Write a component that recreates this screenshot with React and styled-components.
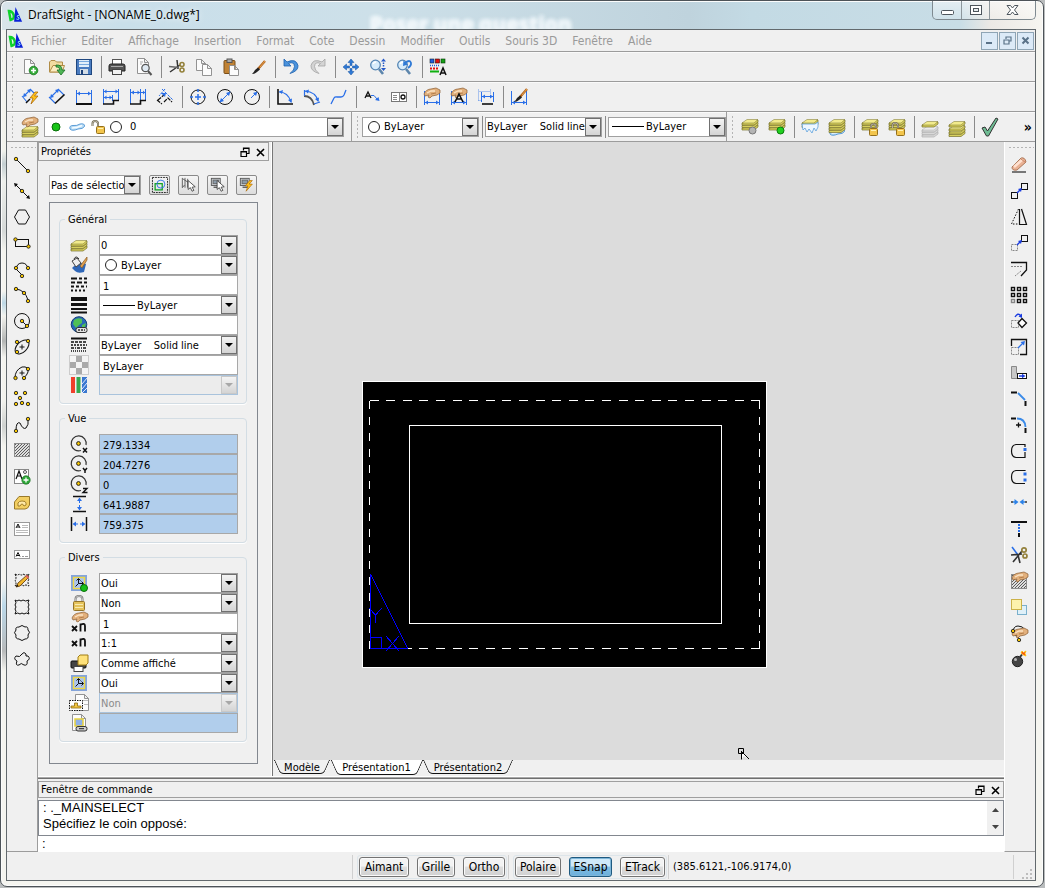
import React from "react";
import styled, { createGlobalStyle, css } from "styled-components";

const ui = `"DejaVu Sans Condensed", "DejaVu Sans", Tahoma, sans-serif`;
const chrome = `"Open Sans", "Noto Sans", "Segoe UI", sans-serif`;
const K = "#111";
const B = "#2a6fe8";

/* ---------- icon parts ---------- */

const Svg = styled.svg`
  display: block;
  flex: none;
  overflow: visible;
`;

const Dot = ({ x, y }) => <circle cx={x} cy={y} r="1.7" fill="#f6c600" stroke="#222" strokeWidth="0.9" />;
const Line = ({ d, c = K, w = 1, dash }) => (
  <path d={d} fill="none" stroke={c} strokeWidth={w} strokeDasharray={dash} />
);
const Hand = ({ x = 0, y = 0 }) => (
  <g transform={`translate(${x} ${y})`}>
    <path d="M1 6 C2 3 5 1 8 1 L13 0 L17 2 V5 L14 7 L9 8 L7 10 L5 9 L6 7 L2 8Z" fill="#e2b07c" stroke="#8a5c30" strokeWidth="0.7" />
    <path d="M4 5 L8 3 L12 3" fill="none" stroke="#fbe3c4" strokeWidth="1.3" />
    <path d="M8 6 L13 5" fill="none" stroke="#a8713e" strokeWidth="0.8" />
  </g>
);
const Stack = ({ y = 0, h = 3, top = "#f2eb8c", side = "#d8d05e", edge = "#77712c" }) => (
  <g transform={`translate(0 ${y})`}>
    {Array.from({ length: h }, (_, i) => (h - 1 - i) * 2.5).map((o) => (
      <g key={o} transform={`translate(0 ${o})`}>
        <path d="M1 5 V7 H13 L17 4 V2Z" fill={side} stroke={edge} strokeWidth="0.7" />
        <path d="M1 5 L6 1.500 H17 L13 5 Z" fill={top} stroke={edge} strokeWidth="0.5" />
      </g>
    ))}
  </g>
);
const Lock = ({ x = 0, y = 0, open }) => (
  <g transform={`translate(${x} ${y})`}>
    <path d={open ? "M-3.500 4 V1.500 Q-3.500 -1 -1 -1 Q2 -1 2 1.500 V4" : "M2 5 V2 Q2 0 4.500 0 Q7 0 7 2 V5"} fill="none" stroke="#6d6650" strokeWidth="2" />
    <path d={open ? "M-3.500 4 V1.500 Q-3.500 -1 -1 -1 Q2 -1 2 1.500 V4" : "M2 5 V2 Q2 0 4.500 0 Q7 0 7 2 V5"} fill="none" stroke="#d8d4c4" strokeWidth="0.7" />
    <rect x="0.500" y="4.500" width="8" height="7" rx="1" fill="#f3c54c" stroke="#94701c" />
    <path d="M2 6.500 H7" stroke="#fff2b0" />
  </g>
);
const Pencil = ({ x = 0, y = 0 }) => (
  <g transform={`translate(${x} ${y})`}>
    <path d="M1 13 L3 9 L12 1 L14 3 L5 12Z" fill="#f1b52c" stroke="#6b4312" strokeWidth="0.9" />
    <path d="M1 13 L2 10.500 L3.500 12Z" fill="#111" />
    <path d="M11 1.500 L13.500 4" stroke="#d66" strokeWidth="2" />
  </g>
);
const Brush = ({ x = 0, y = 0 }) => (
  <g transform={`translate(${x} ${y})`}>
    <path d="M14 1 L7 9" stroke="#b3641a" strokeWidth="2.4" />
    <path d="M14 1 L9 7" stroke="#f0b060" strokeWidth="0.8" />
    <path d="M7 7.500 L9 9.500 L6 12 Q4 14 1 14 Q3 12 4 10Z" fill="#222" />
  </g>
);
const Sheet = ({ x = 0, y = 0, w = 11, h = 14 }) => (
  <path d={`M${x} ${y} H${x + w - 4} L${x + w} ${y + 4} V${y + h} H${x}Z M${x + w - 4} ${y} V${y + 4} H${x + w}`} fill="#fcfcfc" stroke="#888" strokeWidth="0.9" />
);
const Lens = () => (
  <g>
    <path d="M10 11 L14 16" stroke="#5d86ac" strokeWidth="2.6" />
    <circle cx="6.500" cy="7" r="4.800" fill="#d7ecfb" stroke="#5686b4" strokeWidth="1.300" />
    <path d="M4 6 Q5 4 7 4" stroke="#fff" strokeWidth="1.300" fill="none" />
  </g>
);
const Globe = () => (
  <g>
    <circle cx="9" cy="8.500" r="7.800" fill="#2868b8" stroke="#123d73" />
    <path d="M4 4 Q8 1 12 3 L12 7 L9 9 L6 12 L3 8Z" fill="#4fc056" />
    <path d="M12 9 L16 7 L15 11 L12 11Z" fill="#4fc056" />
    <rect x="6" y="11.500" width="11" height="5" rx="2" fill="#e4e4e4" stroke="#333" />
    <path d="M8 14 H15" stroke="#333" strokeWidth="1.500" strokeDasharray="2 1" />
  </g>
);
const Target = ({ t }) => (
  <g>
    <path d="M11 15.500 A7.500 7.500 0 1 1 16 10" fill="none" stroke="#333" strokeWidth="1.200" />
    <circle cx="8.500" cy="8.500" r="1.900" fill="#f6c600" stroke="#222" />
    {t === "x" && <path d="M13 13 L17 17.500 M17 13 L13 17.500" stroke={K} strokeWidth="1.500" />}
    {t === "y" && <path d="M13 13 L15 15.500 L17 13 M15 15.500 V18" fill="none" stroke={K} strokeWidth="1.500" />}
    {t === "z" && <path d="M13 13.500 H17 L13 17.500 H17.500" fill="none" stroke={K} strokeWidth="1.400" />}
  </g>
);
const Axes = () => (
  <g>
    <rect x="1" y="1" width="16" height="16" fill="#84a4da" />
    <rect x="3.500" y="3.500" width="11" height="11" fill="#a9c4ee" stroke="#eed846" strokeWidth="1.400" />
    <path d="M8.500 5 V9.500 H13 M8.500 9.500 L5.500 12.500 M6.500 6.500 L8.500 4.500 L10.500 6.500 M11.500 7.500 L13.500 9.500 L11.500 11.500" fill="none" stroke={K} />
  </g>
);
const Xn = () => (
  <g fill="none" stroke={K} strokeWidth="1.800">
    <path d="M2 9 L7 14 M7 9 L2 14" />
    <path d="M10.500 14.500 V6.500 M10.500 8 Q15 5.500 15 9 V14.500" />
  </g>
);
const Hatch = ({ y = 0, h = 14 }) => (
  <g>
    <rect x="1.500" y={y + 0.5} width="15" height={h} fill="#dedede" stroke="#8c8c8c" />
    {[0, 1, 2, 3, 4, 5, 6, 7, 8].map((i) => {
      const s = 3 + i * 3;
      return (
        <path key={i} stroke="#5c5c5c" strokeWidth="1" d={`M${Math.max(2, s - h + 1)} ${y + Math.min(h, s - 1)} L${Math.min(16, s)} ${y + Math.max(1, s - 15)}`} />
      );
    })}
  </g>
);
const Screen = ({ x = 0, y = 0 }) => (
  <g transform={`translate(${x} ${y})`}>
    <rect x="0.500" y="0.500" width="10" height="8" fill="#c8ccd0" stroke="#555" />
    <rect x="2.500" y="2.500" width="6" height="4" fill="#8a9aa8" stroke="#666" />
    <path d="M3 10.500 H9" stroke="#555" strokeWidth="1.500" />
  </g>
);
const Cursor = ({ x = 0, y = 0 }) => (
  <path transform={`translate(${x} ${y})`} d="M0 0 V10 L2.500 8 L4.500 12 L6.500 11 L4.500 7.500 L8 7Z" fill="#fff" stroke="#333" strokeWidth="0.9" />
);
const Bolt = ({ x = 0, y = 0 }) => (
  <path transform={`translate(${x} ${y})`} d="M5 0 L0 6 H3 L1 12 L8 4 H4.500 L8 0Z" fill="#ffc21a" stroke="#a55f00" strokeWidth="0.700" />
);
const Puddle = ({ x = 0, y = 0 }) => (
  <g transform={`translate(${x} ${y})`}>
    <path d="M1 6 Q0 2.500 4 2.500 Q8 3 11 1 Q16 0 15.500 3.500 Q14 6 9 6 Q3 8.500 1 6Z" fill="#b9dcf5" stroke="#4f94d2" strokeWidth="0.9" />
    <path d="M3 5 Q8 5 13 2.500" stroke="#f4fbff" strokeWidth="1.500" fill="none" />
  </g>
);
const Arrows = () => (
  <g>
    <Line d="M1.500 3 V17 M16.500 3 V17 M2 14.500 H16" c={B} />
    <path d="M2 14.500 L5 12.500 V16.500Z M16 14.500 L13 12.500 V16.500Z" fill={B} />
  </g>
);

const icons = {
  logo: (
    <g>
      <path d="M2.200 4.500 L4 14.500 Q8.500 14 7.500 9 Q6 4.500 2.200 4.500Z" fill="none" stroke="#10d22c" strokeWidth="2.800" />
      <path d="M8 16.500 L9.500 0 L17 16.500Z" fill="#0a22d8" />
      <path d="M13.500 9.500 Q11 9 11.500 11 Q14.500 12 13.500 13.500 Q12.500 14.500 10.500 13.500" fill="none" stroke="#8fe0f4" strokeWidth="1.100" />
    </g>
  ),
  neu: (<g><Sheet x={3.5} y={1.5} w={10} h={14} /><circle cx="12.500" cy="12.500" r="4.300" fill="#35ad3a" stroke="#19751e" strokeWidth="0.8" /><path d="M12.500 10 V15 M10 12.500 H15" stroke="#fff" strokeWidth="1.600" /></g>),
  open: (<g><path d="M1.500 14 V4 L3 2.500 H7 L8.500 4 H14.500 V14Z" fill="#f3dca0" stroke="#b08c46" /><path d="M1.500 14 L5 7.500 H16.500 L14 14Z" fill="#fbecc0" stroke="#b08c46" /><path d="M8 7 Q14 6.500 14 12 H17 L13 17 L9 12 H11.500 Q12 9 8 9Z" fill="#4fb556" stroke="#1b6e26" strokeWidth="0.8" /></g>),
  save: (<g><rect x="1.500" y="1.500" width="15" height="15" fill="#4a7cc0" stroke="#1f477f" /><rect x="4" y="2" width="10" height="7" fill="#e3effa" /><path d="M4 3.500 H14 M4 6.500 H14" stroke="#7aaade" /><rect x="5" y="11" width="8" height="5" fill="#d4dde6" /><rect x="6" y="12" width="2" height="4" fill="#1d4178" /></g>),
  print: (<g><rect x="4.500" y="1.500" width="9" height="5" fill="#fff" stroke="#555" /><path d="M1 8 Q1 6 3 6 H15 Q17 6 17 8 V13 H1Z" fill="#555" stroke="#222" /><path d="M3 8.500 H15" stroke="#aaa" /><rect x="4.500" y="11.500" width="9" height="5" fill="#f2f2f2" stroke="#444" /></g>),
  preview: (<g><Sheet x={2.5} y={0.5} w={11} h={15} /><path d="M5 4 H8 M5 6 H7" stroke="#aaa" /><path d="M13 13 L16.500 17" stroke="#555" strokeWidth="2" /><circle cx="10.500" cy="10" r="3.700" fill="#dfe9f2" stroke="#555" strokeWidth="1.200" /></g>),
  cut: (<g><path d="M2 14 L12 7 M9 2 L10 11" stroke="#333" strokeWidth="1.500" /><path d="M1 8.500 L11 9.500" stroke="#666" strokeWidth="1.500" /><circle cx="14" cy="6.500" r="2" fill="none" stroke="#93803a" strokeWidth="1.600" /><circle cx="14" cy="12" r="2" fill="none" stroke="#93803a" strokeWidth="1.600" /></g>),
  copy: (<g><Sheet x={1.5} y={1.5} w={9} h={11} /><Sheet x={7.5} y={6.5} w={9} h={11} /></g>),
  paste: (<g><rect x="2" y="2.500" width="11" height="13" rx="1" fill="#c08234" stroke="#7a4e18" /><rect x="5" y="1" width="5" height="3.500" fill="#aaa" stroke="#555" /><Sheet x={7.5} y={7.5} w={9} h={10} /></g>),
  brush: <Brush x={2} y={2} />,
  undo: <path d="M2 1 V8 H9 L6.500 5.500 Q12 3 12.500 8.500 Q12.500 12 8 15.500 Q16.500 13 16 7.500 Q14 0 5 4Z" fill="#4b93dc" stroke="#1c61ae" strokeWidth="0.8" />,
  redo: <path d="M16 1 V8 H9 L11.500 5.500 Q6 3 5.500 8.500 Q5.500 12 10 15.500 Q1.500 13 2 7.500 Q4 0 13 4Z" fill="#d4d4d4" stroke="#a4a4a4" strokeWidth="0.8" />,
  pan: (<g fill="#2f7ad6" stroke="#1653a0" strokeWidth="0.5"><path d="M9 1 L12 4.500 H10 V7.500 H8 V4.500 H6Z M9 17 L12 13.500 H10 V10.500 H8 V13.500 H6Z M1 9 L4.500 6 V8 H7.500 V10 H4.500 V12Z M17 9 L13.500 6 V8 H10.500 V10 H13.500 V12Z" /></g>),
  zoomdyn: (<g><Lens /><path d="M14.500 0.500 L17 3.500 H12Z M14.500 13 L17 10 H12Z" fill="#2458c8" /><path d="M14.500 4.500 V9" stroke="#2458c8" strokeWidth="1.500" strokeDasharray="1.500 1" /></g>),
  zoomprev: (<g><Lens /><path d="M9 5 Q14 1 15 5 Q15.500 8 12 10" fill="none" stroke="#2f7ad6" strokeWidth="1.800" /><path d="M7 8 L7.500 2.500 L12 6.500Z" fill="#2f7ad6" /></g>),
  entity: (<g><rect x="1" y="1" width="4" height="4" fill="#1f5fe0" stroke="#123" strokeWidth="0.600" /><rect x="6.500" y="1" width="4" height="4" fill="#e01010" stroke="#300" strokeWidth="0.600" /><rect x="12" y="1" width="4" height="4" fill="#18a018" stroke="#030" strokeWidth="0.600" /><path d="M1 7.500 H11" stroke="#1f5fe0" strokeWidth="1.500" strokeDasharray="1 1" /><path d="M1 10.500 H10" stroke="#e01010" strokeWidth="2" strokeDasharray="2 1" /><path d="M1 13.500 H10" stroke="#10b010" strokeWidth="2" /><path d="M11 17 L14 10 L17 17 M12 15 H16" fill="none" stroke={K} strokeWidth="1.500" /></g>),

  dimSmart: (<g><Line d="M3 8 L9 2 M1 8 L6 14 M9 1 L13 5" c={B} w={1.1} /><path d="M2 9 L6 8 L3 5Z M10 1 L6 2 L9 5Z" fill={B} /><Line d="M5 15 L9 11" w={1.5} /><Bolt x={9} y={4} /></g>),
  dimAligned: (<g><Line d="M3 9 L10 2 M1 9 L7 15 M10 1 L16 7" c={B} w={1.1} /><path d="M2 10 L6 9 L3 6Z M11 1 L7 2 L10 5Z" fill={B} /><Line d="M7 15.500 L16.500 6.500" w={1.700} /></g>),
  dimLinear: (<g><Line d="M1.500 2 V15 M16.500 2 V15 M2 5.500 H16" c={B} /><path d="M2 5.500 L5 3.500 V7.500Z M16 5.500 L13 3.500 V7.500Z" fill={B} /><Line d="M1 16 H17" w={2} /></g>),
  dimBase: (<g><Line d="M1.500 1 V16 M16.500 1 V12 M2 3.500 H16 M2 9.500 H10 M10.500 7 V13" c={B} /><path d="M2 3.500 L4.500 1.500 V5.500Z M16 3.500 L13.500 1.500 V5.500Z M2 9.500 L4.500 7.500 V11.500Z M10 9.500 L7.500 7.500 V11.500Z" fill={B} /><Line d="M1 16 H11.500 V12.500 H17" w={1.6} /></g>),
  dimCont: (<g><Line d="M1.500 1 V16 M11.500 1 V12 M16.500 1 V12 M2 4.500 H16" c={B} /><path d="M2 4.500 L5 2.500 V6.500Z M11 4.500 L8.500 2.500 V6.500Z M16 4.500 L14 2.500 V6.500Z" fill={B} /><Line d="M1 16 H11.500 V12.500 H17" w={1.6} /></g>),
  dimObl: (<g><Line d="M6 1 L17 12 M9 1 L3 8" c={B} dash="3 1" /><Line d="M1 12 L6 16 M2 12 L8 7 M8 14 L12 10 L16 14" dash="4 1" w={1.2} /><path d="M5 5 L10 5 L9 9Z" fill={B} /></g>),
  centre: (<g><circle cx="9" cy="9" r="7" fill="none" stroke={K} /><Line d="M9 1 V4 M9 14 V17 M1 9 H4 M14 9 H17 M9 6 V12 M6 9 H12" c={B} w={1.5} /></g>),
  diam: (<g><circle cx="9" cy="9" r="7.500" fill="none" stroke={K} /><Line d="M5 13 L13 5" c={B} /><path d="M3.500 14.500 L8 13 L5 10Z M14.500 3.500 L10 5 L13 8Z" fill={B} /></g>),
  radius: (<g><circle cx="9" cy="9" r="7.500" fill="none" stroke={K} /><Line d="M8 10 L13 5" c={B} /><path d="M14.500 3.500 L10 5 L13 8Z" fill={B} /></g>),
  angle: (<g><Line d="M2 1 V16 H17" w={1.6} /><Line d="M3 4 Q12 4 15 14" c={B} w={1.2} /><path d="M3 3.500 L7 2 L6 6Z M15.500 15 L12 12 L16 10.500Z" fill={B} /></g>),
  arc: (<g><Line d="M1 8 Q9 8 11 17" w={1.8} c="#555" /><Line d="M2 3 Q13 4 15 13 M1.500 2 V8 M11 16 L17 14" c={B} w={1.2} /><path d="M2 3 L6 1.500 L5 5.500Z M15.500 14 L12 11 L16 9.500Z" fill={B} /></g>),
  jog: <Line d="M1 16 L4 10 Q5 8.500 7 9 L11 9 Q13 9 14 7 L16 2" c={B} w={1.3} />,
  note: (<g><Line d="M2 10 L5 4 L8 10 M3 8 H7" w={1.3} /><Line d="M8 7.500 H11 L14 11" c={B} /><path d="M16.500 13 L12 12 L15.500 9Z" fill={B} /></g>),
  tol: (<g><rect x="1.500" y="4.500" width="15" height="9" fill="#fff" stroke="#777" /><path d="M9.500 5 V13 M3 7.500 H7 M3 9.500 H7 M3 11.500 H7" stroke="#888" /><circle cx="13" cy="9" r="2" fill="none" stroke={K} strokeWidth="1.300" /></g>),
  editDim: (<g><Arrows /><Hand /></g>),
  editDimText: (<g><Arrows /><Hand /><Line d="M5 14 L9 6 L13 14 M6 11 H12" w={1.6} /></g>),
  dimShift: (
    <g>
      <g opacity="0.35"><Line d="M1.500 1 V13 M13.500 1 V6 M2 3.500 H13 M1 12.500 H5" c={B} /></g>
      <Line d="M4.500 4 V14 M16.500 4 V14 M5 8.500 H16" c={B} />
      <path d="M5 8.500 L8 6.500 V10.500Z M16 8.500 L13 6.500 V10.500Z" fill={B} />
      <Line d="M5 16 H16" w={1.6} />
    </g>
  ),
  dimPaint: (<g><Arrows /><Brush x={3} y={0} /></g>),

  layerMgr: (<g><Stack y={7} h={3} /><Hand x={0} y={-1} /></g>),
  layOff: (<g><Stack /><circle cx="11.500" cy="12.500" r="3.500" fill="#b4b4b4" stroke="#777" /></g>),
  layOn: (<g><Stack /><circle cx="12.500" cy="12.500" r="3.500" fill="#20d020" stroke="#0b7a0b" /></g>),
  layFreeze: (<g><Stack h={2} /><path d="M1 6 H14 L17 4 V9 L15 13 L13 10 L11 15 L8 11 L6 14 L4 10 L2 12Z" fill="#eef7ff" stroke="#5aa0dc" strokeWidth="0.8" /></g>),
  layThaw: (<g><Puddle x={1} y={10} /><Stack h={4} /></g>),
  layLock: (<g><Stack /><Lock x={8} y={6} /></g>),
  layUnlock: (<g><Stack /><Lock x={8} y={6} open /></g>),
  layIso: (<g><Stack y={7} h={3} top="#ececec" side="#d8d8d8" edge="#b0b0b0" /><Stack y={2} h={1} /></g>),
  layUniso: (<g><Stack y={9} h={2} /><Stack y={6} h={1} /><Stack y={2} h={1} /></g>),
  check: <path d="M1 10 L4 9 L6.500 13 L15 0 L17 1 L7.500 18 H5.500Z" fill="#6fbd94" stroke="#333" strokeWidth="1" />,
  green: <circle cx="9" cy="9" r="4" fill="#18c418" stroke="#0a700a" />,
  puddle: <Puddle x={1} y={5} />,
  unlock: <Lock x={7} y={4} open />,

  line: (<g><Line d="M3 3 L15 15" /><Dot x={3} y={3} /><Dot x={15} y={15} /></g>),
  xline: (<g><Line d="M2 2 L16 16" /><path d="M1 1 L5 2 L2 5Z M17 17 L13 16 L16 13Z" fill={K} /><Dot x={9} y={9} /></g>),
  poly: <path d="M5.500 2 H12.500 L16.500 9 L12.500 16 H5.500 L1.500 9Z" fill="none" stroke={K} />,
  rect: (<g><rect x="2.500" y="5.500" width="13" height="7" fill="none" stroke={K} /><Dot x={2.500} y={5.500} /><Dot x={15.500} y={12.500} /></g>),
  arc3: (<g><Line d="M10 16 L3 9 Q4 3 9 3 Q14 3 15 9" /><Dot x={3} y={8} /><Dot x={15} y={8} /><Dot x={9} y={16} /></g>),
  arcS: (<g><Line d="M3 3 Q12 4 15 14" /><Dot x={3} y={3} /><Dot x={11} y={7} /><Dot x={15} y={15} /></g>),
  circle: (<g><circle cx="9" cy="9" r="7.500" fill="none" stroke={K} /><Line d="M9 9 L14 14" /><Dot x={9} y={9} /><Dot x={14} y={14} /></g>),
  ellipse: (<g><ellipse cx="9" cy="9" rx="8.500" ry="5" transform="rotate(-45 9 9)" fill="none" stroke={K} /><Line d="M9 6.500 V11.500 M6.500 9 H11.500" /><Dot x={4} y={4} /><Dot x={15} y={3} /><Dot x={4} y={14} /></g>),
  ellArc: (<g><Line d="M2 14 Q2 6 9 3 Q16 2 15 8 Q14 12 10 14" /><Line d="M9 6.500 V11.500 M6.500 9 H11.500" /><Dot x={2.500} y={14} /><Dot x={15} y={5} /><Dot x={11} y={14} /></g>),
  points: (<g><Dot x={3} y={3} /><Dot x={12} y={3} /><Dot x={7} y={8} /><Dot x={3} y={14} /><Dot x={9} y={13} /><Dot x={15} y={14} /></g>),
  spline: (<g><Line d="M3 15 Q3 5 7 7 Q10 14 13 12 Q16 9 15 3" /><Dot x={3} y={15} /><Dot x={15} y={3} /></g>),
  hatch: <Hatch y={1} h={13} />,
  annot: (<g><rect x="1.500" y="1.500" width="14" height="14" fill="#fff" stroke="#888" /><Line d="M3 11 L6 3 L9 11 M4 8 H8" w={1.2} /><circle cx="12" cy="4" r="1.500" fill="none" stroke="#555" /><circle cx="13" cy="12" r="4.200" fill="#2ea838" stroke="#187020" strokeWidth="0.7" /><path d="M13 9.500 V14.500 M10.500 12 H15.500" stroke="#fff" strokeWidth="1.300" /></g>),
  region: (<g><path d="M1.500 15 V8 L6 2.500 H16.500 V11 Q15 15 12 15Z" fill="#f3cf62" stroke="#9a7a2a" /><path d="M5 12 V9 Q6 7 9 7 Q13 7 13 9 V11 L11 12 L9.500 10 H8.500 L7 12Z" fill="#ffe9a8" stroke="#8d6a14" strokeWidth="0.8" /></g>),
  mtext: (<g><rect x="1.500" y="2.500" width="15" height="13" fill="#fff" stroke="#999" /><Line d="M3 8 L5 4 L7 8 M4 7 H6" /><path d="M9 5.500 H15 M9 7.500 H15 M3 10.500 H15 M3 12.500 H15" stroke="#bbb" /></g>),
  stext: (<g><rect x="1.500" y="4.500" width="15" height="8" fill="#fff" stroke="#999" /><Line d="M3 10.500 L5 6.500 L7 10.500 M4 9.500 H6" /><path d="M9 10.500 H11 M12 10.500 H15" stroke="#999" /></g>),
  cloudEdit: (<g><path d="M2 2 Q5 4 6 2 Q9 4 10 2 Q13 4 16 2 Q14 6 16 7 Q14 10 16 14 Q12 12 11 14 Q8 12 6 14 Q4 12 2 14 Q4 11 2 9 Q4 6 2 2Z" fill="none" stroke={K} strokeDasharray="2 1" /><Pencil x={2} y={2} /></g>),
  cloudRect: <path d="M2 2 Q4 4 6 2 Q8 4 10 2 Q12 4 16 2 Q14 5 16 7 Q14 9 16 11 Q14 13 16 16 Q13 14 11 16 Q9 14 7 16 Q5 14 2 16 Q4 13 2 11 Q4 9 2 7 Q4 5 2 2Z" fill="none" stroke={K} />,
  cloudEll: <path d="M6 3 Q9 0 12 3 Q15 2 15 6 Q18 8 15 11 Q16 15 12 15 Q9 18 6 15 Q2 15 3 11 Q0 9 3 6 Q2 3 6 3Z" fill="none" stroke={K} />,
  cloudFree: <path d="M9 4 Q11 1 13 4 Q12 7 15 6 Q18 9 14 11 Q15 16 11 15 Q8 12 6 15 Q2 16 4 11 Q0 9 3 6 Q7 8 9 4Z" fill="none" stroke={K} />,

  erase: (<g><path d="M2 16 H16" stroke="#777" strokeWidth="2" /><path d="M2 11 L11 2 Q15 1 16 6 L7 14 Q2 15 2 11Z" fill="#eab295" stroke="#a56f50" strokeWidth="0.9" /><path d="M4 11 L12.500 3.500" stroke="#ffe1d0" strokeWidth="2.500" /><path d="M11 3 L15.500 6.500" stroke="#c88464" /></g>),
  move: (<g><rect x="1.500" y="10.500" width="6" height="6" fill="none" stroke={K} /><rect x="11.500" y="1.500" width="6" height="6" fill="none" stroke={K} /><Line d="M7 11 L11 7" c="#1a3ce0" w={1.5} /><path d="M12 6 L8 7 L11 10Z" fill="#1a3ce0" /></g>),
  mirror: (<g><Line d="M8.500 1 L1.500 16 H8.500" dash="1.5 1.5" /><Line d="M9.500 1 V16.500 H16.500 L11.500 1" w={1.2} /></g>),
  copyE: (<g><rect x="1.500" y="10.500" width="6" height="6" fill="none" stroke="#888" strokeDasharray="2 1" /><rect x="11.500" y="1.500" width="6" height="6" fill="none" stroke={K} /><Line d="M7 11 L11 7" c="#1a3ce0" w={1.5} /><path d="M12 6 L8 7 L11 10Z" fill="#1a3ce0" /></g>),
  offset: (<g><Line d="M1 2.500 H16.500 V10 L11 16" w={1.3} /><Line d="M1 6.500 H13 M11 11 L5 16" c="#888" dash="2 1" /></g>),
  pattern: (<g fill="none" strokeWidth="1.400">{[0, 1, 2].map((r) => [0, 1, 2].map((c) => <rect key={`${r}${c}`} x={1.5 + c * 6} y={1.5 + r * 6} width="3" height="3" stroke={r === 2 && c === 0 ? "#888" : K} />))}</g>),
  rotate: (<g><rect x="1.500" y="8.500" width="7" height="7" fill="none" stroke="#888" strokeDasharray="2 1" /><path d="M8 11 L12 6.500 L16.500 11 L12 15.500Z" fill="#fff" stroke={K} strokeWidth="1.300" /><Line d="M5 5 Q8 0 11 4" c="#1a3ce0" w={1.4} /><path d="M12 6 L8.500 4.500 L12 1.500Z" fill="#1a3ce0" /></g>),
  scale: (<g><Line d="M1.500 8 V1.500 H16.500 V16.500 H10" w={1.3} /><rect x="1.500" y="9.500" width="7" height="7" fill="none" stroke="#888" strokeDasharray="2 1" /><Line d="M8 10 L13 5" c={B} w={1.3} /><path d="M15 3 L10.500 4 L14 7.500Z" fill={B} /></g>),
  stretch: (<g><path d="M1.500 2.500 H6.500 V9.500 H9 V14.500 H1.500Z" fill="#c8c8c8" stroke="#888" /><rect x="7.500" y="9.500" width="9" height="5" fill="#fff" stroke={K} /><Line d="M9 12 H13" c="#1a3ce0" w={1.5} /><path d="M15.500 12 L12 9.800 V14.200Z" fill="#1a3ce0" /></g>),
  chamfer: (<g><Line d="M1 2.500 H7 M15.500 11 V16" w={2} /><Line d="M8 3 L15 10" c="#3a8ae8" w={1.8} /></g>),
  fillet: (<g><Line d="M1 2.500 H6 M15.500 12 V17" w={2} /><Line d="M7 2.500 Q15 2.500 15.500 11" c="#3a8ae8" w={1.8} /><Line d="M8.500 6.500 V11.500 M6 9 H11" w={1.3} /></g>),
  splitPt: (<g><Line d="M15 5 V2.500 H6 Q1.500 3 1.500 9 Q1.500 15 6 15.500 H15 V10" w={1.2} /><rect x="13.500" y="6" width="3" height="3" fill={B} /></g>),
  split: (<g><Line d="M15 3 V2.500 H6 Q1.500 3 1.500 9 Q1.500 15 6 15.500 H15" w={1.2} /><rect x="13.500" y="4.500" width="3" height="3" fill={B} /><rect x="13.500" y="10.500" width="3" height="3" fill={B} /></g>),
  weld: (<g><path d="M8.500 8 L4.500 5 V11Z M9.500 8 L13.500 5 V11Z" fill="#2c82e8" /><Line d="M3 8 H6 M12 8 H15" c="#2c82e8" w={1.6} /><Line d="M1 8 H3 M15 8 H17" c="#333" w={1.6} /></g>),
  extend: (<g><Line d="M1 2 H17" w={2} /><Line d="M9 4 V13" c={B} w={2} dash="2 1" /><Line d="M9 13 V17" w={2} /></g>),
  trim: (<g><Line d="M2 1 L8 9" c={B} w={1.6} /><Line d="M1 9 L12 8 M3 16 L12 5 M8 9 L10 17" c="#333" w={1.6} /><circle cx="14" cy="4" r="2.200" fill="none" stroke="#93803a" strokeWidth="1.700" /><circle cx="15" cy="10" r="2" fill="none" stroke="#93803a" strokeWidth="1.700" /></g>),
  hatchEdit: (<g><Hatch y={2} h={14} /><Hand x={1} y={0} /></g>),
  order: (<g><rect x="7.500" y="7.500" width="9" height="9" fill="#dff0f8" stroke="#7ab0cc" /><rect x="1.500" y="1.500" width="10" height="10" fill="#fdf2ac" stroke="#ccb24a" /></g>),
  polyEdit: (<g><Line d="M3 9 Q3 2 8 2 Q13 2 15 6 M3 9 L10 15" /><Hand x={1} y={4} /><Dot x={3} y={7} /><Dot x={9} y={16} /></g>),
  bomb: (<g><circle cx="7.500" cy="11.500" r="5.200" fill="#444" stroke="#222" /><circle cx="5.500" cy="9.500" r="1.500" fill="#bbb" /><Line d="M10 7 L12 4.500" w={2} c="#333" /><path d="M11 3 L12 1 L13.500 2.500 L16 1 L15 3.500 L16 6 L13.500 5Z" fill="#f84a10" stroke="#ffc400" strokeWidth="0.8" /></g>),

  pLayer: <Stack y={3} h={3} />,
  pColor: (<g><path d="M2 12 Q9 5 16 8 L14 16 Q8 18 5 15Z" fill="#2f67b8" /><path d="M2 5 L7 2 L11 7 L6 11Z" fill="#eee" stroke="#444" /><path d="M4 3 Q6 -1 9 3" fill="none" stroke="#333" /><path d="M17 1 L10 10 L12 12 L17 4Z" fill="#e0a050" stroke="#8a5a20" strokeWidth="0.7" /></g>),
  pScale: <path d="M1 2.500 H7 M9 2.500 H12 M14 2.500 H17 M1 6.500 H5 M7 6.500 H12 M14 6.500 H17 M1 10.500 H4 M6 10.500 H9 M11 10.500 H14 M16 10.500 H17 M1 14.500 H3 M5 14.500 H7 M9 14.500 H11 M13 14.500 H15" stroke={K} strokeWidth="2" />,
  pWeight: (<g stroke={K}><path d="M1 3 H17" strokeWidth="4" /><path d="M1 8.500 H17" strokeWidth="3" /><path d="M1 13 H17 M1 16.500 H17" strokeWidth="2" /></g>),
  pLink: <Globe />,
  pStyle: (<g stroke={K} fill="none"><path d="M1 2.500 H17" strokeWidth="2" /><path d="M1 6 H17" strokeWidth="1.500" strokeDasharray="3 1" /><path d="M1 9 H17" strokeWidth="1.500" strokeDasharray="2 1" /><path d="M1 12 H17" strokeWidth="1.500" strokeDasharray="3 1 1 1" /><path d="M1 15 H17" strokeWidth="1.500" strokeDasharray="1 1" /></g>),
  pTransp: (<g><rect width="19" height="19" x="-0.500" y="-0.500" fill="#f4f4f4" stroke="#ccc" /><path d="M6 0 H12 V6 H6Z M0 6 H6 V12 H0Z M12 6 H18 V12 H12Z M6 12 H12 V18 H6Z" fill="#aaa" /></g>),
  pPrint: (<g><rect x="1" y="1" width="4" height="16" fill="#f0402c" /><rect x="6.500" y="1" width="4" height="16" fill="#35a850" /><rect x="12" y="1" width="5" height="16" fill="#3a78d0" /><path d="M12 8 L17 2 M12 13 L17 7 M12 17 L17 12" stroke="#dfe9ff" /></g>),
  vx: <Target t="x" />,
  vy: <Target t="y" />,
  vz: <Target t="z" />,
  vh: (<g><Line d="M3 1.500 H16 M3 16.500 H16" w={1.5} /><Line d="M9.500 4 V14" c={B} dash="4 2" /><path d="M9.500 2.500 L12 6 H7Z M9.500 15.500 L12 12 H7Z" fill={B} /></g>),
  vw: (<g><Line d="M1.500 2 V16 M16.500 2 V16" w={1.5} /><Line d="M4 9 H14" c={B} dash="4 2" /><path d="M2.500 9 L6 6.500 V11.500Z M15.500 9 L12 6.500 V11.500Z" fill={B} /></g>),
  dOn: (<g><Axes /><circle cx="14" cy="14" r="3.500" fill="#18c018" stroke="#0a700a" /></g>),
  dLock: (<g><path d="M5.500 8 V5 Q5.500 2 9 2 Q12.500 2 12.500 5 V8" fill="none" stroke="#777" strokeWidth="2" /><path d="M5.500 8 V5 Q5.500 2 9 2 Q12.500 2 12.500 5 V8" fill="none" stroke="#ddd" strokeWidth="0.7" /><rect x="3.500" y="7.500" width="11" height="9" rx="1" fill="#e4c25a" stroke="#94742a" /><path d="M5 10.500 H13 M5 13.500 H13" stroke="#f8eab0" /></g>),
  dScale: (<g><g transform="translate(0 3)"><Xn /></g><Hand x={1} y={-2} /></g>),
  dStd: <g transform="translate(0 -2)"><Xn /></g>,
  dShade: (<g><rect x="1" y="7" width="15" height="7" rx="1" fill="#444" stroke="#111" /><rect x="4" y="12.500" width="9" height="5" fill="#fff" stroke="#444" /><path d="M8 3 L10 1 H18 V9 L16 11 H8Z" fill="#ffe27a" stroke="#a07c14" /></g>),
  dUcs: <Axes />,
  dAnn: (<g><Sheet x={5.5} y={0.5} w={13} h={16} /><path d="M12 6.500 H18 M14 10.500 H18" stroke="#bbb" /><rect x="-0.500" y="6.500" width="13" height="10" fill="#fff" stroke={K} strokeDasharray="1.5 1" /><path d="M1 14 V12 H4.500 V9 H7.500 V12 H11 V14Z" fill="#f2c540" stroke="#8b6914" strokeWidth="0.8" /></g>),
  dLink: (<g><Sheet x={2.5} y={0.5} w={13} h={16} /><rect x="5" y="5" width="8" height="7" fill="#8fb0e8" stroke="#e8d23c" strokeWidth="1.500" /><rect x="6" y="12.500" width="11" height="4.500" rx="2" fill="#ccc" stroke="#333" /><path d="M9 14.700 H14" stroke="#222" /></g>),

  selArea: (<g><rect x="0.500" y="0.500" width="17" height="17" fill="none" stroke={K} strokeDasharray="2 1" /><rect x="3.500" y="7.500" width="8" height="7" fill="none" stroke="#0ba020" strokeWidth="1.400" /><circle cx="10" cy="8" r="4.500" fill="none" stroke={B} /></g>),
  selPick: (<g><path d="M1.500 1 V12 L4 9 M4.500 1 V12 M7.500 2 V12 M2 2 L8 6" fill="none" stroke="#555" /><Cursor x={8} y={4} /></g>),
  selScreen: (<g><Screen x={1} y={1} /><Cursor x={8} y={4} /></g>),
  selFilter: (<g><Screen x={1} y={1} /><Bolt x={7} y={4} /></g>),
};

const Icon = ({ name, size = 18 }) => (
  <Svg width={size} height={size} viewBox="0 0 18 18" aria-hidden="true">{icons[name]}</Svg>
);

/* ---------- window frame ---------- */

const Global = createGlobalStyle`
  * { box-sizing: border-box; }
  body { margin: 0; background: #b9bcbd; font: 11px/14px ${ui}; color: #000; }
  button, input, select, textarea { font: inherit; color: inherit; margin: 0; }
`;

const Frame = styled.div`
  display: flex;
  flex-direction: column;
  min-height: calc(100vh - 1px);
  margin: 0 1px 1px 0;
  padding: 0 7px 5px 5px;
  border: 1px solid #4d5358;
  border-radius: 7px;
  box-shadow: inset 0 0 0 1px #fbfcfc;
  background:
    linear-gradient(90deg, #d9e4ea 0, #c9dfea 120px, #cde0e9 36%, #bfd3dd 66%, #c3dae4 72%, #c8dde6 92%, #ece9e5 95%, #f6f5f0 100%) top / 100% 29px no-repeat,
    linear-gradient(180deg, #f4f4ef 0, #f1f2ec 150px, #c4cfd2 163px, #eef0ec 180px, #d5d9d8 230px, #f4f4ef 250px, #f4f4ef 290px, #bdd8e6 302px, #f3f3ee 315px, #b3b5b4 340px, #f3f3ee 356px, #f2f2ed 400px, #cfd2d0 425px, #f4f4ef 445px, #f4f4ef 580px, #bcd9ea 605px, #b8babb 650px, #f4f4ef 670px, #f4f4ef 100%) left / 6px 100% no-repeat,
    #f5f5f0;
`;

const TitleBar = styled.header`
  display: flex;
  align-items: center;
  height: 28px;
  overflow: hidden;
  font: 12px/16px ${chrome};
`;

const AppTitle = styled.h1`
  display: flex;
  align-items: center;
  gap: 5px;
  margin: 0;
  padding-left: 1px;
  font: inherit;
  text-shadow: 0 0 6px #fff;
`;

const GlassText = styled.span`
  flex: 1;
  align-self: flex-end;
  margin-left: 170px;
  font: 700 21px/18px ${chrome};
  color: transparent;
  text-shadow: 0 4px 4px #f2f8fb, 0 4px 4px #f2f8fb;
  white-space: nowrap;
`;

const WindowButtons = styled.div`
  display: flex;
  align-self: flex-start;
  height: 19px;
  border: 1px solid #7f8a90;
  border-top: 0;
  border-radius: 0 0 5px 5px;
  overflow: hidden;
`;

const WindowButton = styled.button`
  display: grid;
  place-items: center;
  width: ${(p) => (p.$wide ? 46 : 28)}px;
  padding: 0;
  border: 0;
  border-left: ${(p) => (p.$first ? 0 : 1)}px solid #8d979c;
  background: linear-gradient(rgba(255, 255, 255, 0.5), rgba(255, 255, 255, 0.15));
`;

const Client = styled.div`
  flex: 1;
  display: flex;
  flex-direction: column;
  min-width: 0;
  border: 1px solid #62696d;
  background: #f0f0f0;
`;

const MenuBar = styled.nav`
  display: flex;
  align-items: center;
  height: 22px;
  padding: 0 1px;
  border-bottom: 1px solid #9c9c9c;
  font: 12px/16px ${ui};
`;

const MenuList = styled.div`
  display: flex;
  flex: 1;
  gap: 15px;
  padding-left: 7px;
`;

const MenuItem = styled.button`
  padding: 0;
  border: 0;
  background: none;
  color: #9a9a9a;
`;

const MdiButtons = styled.div`
  display: flex;
  gap: 1px;
`;

const MdiButton = styled.button`
  display: grid;
  place-items: center;
  width: 17px;
  height: 18px;
  padding: 0;
  border: 1px solid #8fa5b5;
  background: #dceaf7;
`;

/* ---------- toolbars ---------- */

const Toolbar = styled.div`
  display: flex;
  align-items: center;
  height: 30px;
  overflow: hidden;
  border-bottom: 1px solid #9c9c9c;
  box-shadow: inset 0 1px #fafafa;
`;

const Grip = styled.span`
  flex: none;
  ${(p) => p.$flat
    ? css`width: 26px; height: 3px; margin: 4px auto 3px 3px; background: radial-gradient(circle, #b4b4b4 1px, transparent 1px) 0 0 / 4px 3px;`
    : css`width: 3px; height: 24px; margin: 0 3px 0 4px; background: radial-gradient(circle, #b4b4b4 1px, transparent 1px) 0 0 / 3px 4px;`}
`;

const ToolButton = styled.button`
  display: grid;
  place-items: center;
  flex: none;
  width: 27px;
  height: 26px;
  padding: 0 1px 0 0;
  border: 0;
  background: none;
`;

const Separator = styled.span`
  flex: none;
  width: 1px;
  height: 22px;
  margin: 0 2px 0 3px;
  background: #8a8a8a;
`;

const SectionEnd = styled.span`
  flex: none;
  align-self: stretch;
  width: 1px;
  margin-left: ${(p) => p.$gap}px;
  background: #9c9c9c;
`;

const Overflow = styled.button`
  margin-left: auto;
  padding: 0 3px 0 0;
  border: 0;
  background: none;
  font: 700 14px/16px ${ui};
`;

const SideBar = styled.div`
  display: flex;
  flex-direction: column;
  align-items: center;
  border-bottom: 1px solid #9c9c9c;
  ${(p) => (p.$left ? "border-right: 1px solid #9c9c9c;" : "border-left: 1px solid #fff; padding-right: 2px;")}
`;

const Tools = ({ items }) =>
  items.map((it, i) =>
    it === "|" ? <Separator key={i} /> : (
      <ToolButton key={i} type="button" aria-label={it[1]}><Icon name={it[0]} /></ToolButton>
    )
  );

/* ---------- combo boxes and fields ---------- */

const ComboBox = styled.span`
  display: grid;
  flex: ${(p) => (p.$width ? "none" : 1)};
  width: ${(p) => (p.$width ? `${p.$width}px` : "auto")};
  height: 20px;
  min-width: 0;
  > * { grid-area: 1 / 1; }
`;

const Select = styled.select`
  appearance: none;
  width: 100%;
  height: 20px;
  padding: 1px 16px 0 ${(p) => p.$indent}px;
  border: 1px solid #a0a0a0;
  border-radius: 0;
  background: #fff;
  &:disabled { background: #ececec; color: #8a8a8a; border-color: #a9c3dc; opacity: 1; }
`;

const Arrow = styled.span`
  justify-self: end;
  align-self: center;
  display: grid;
  place-items: center;
  width: 16px;
  height: 18px;
  margin-right: 1px;
  border: 1px solid ${(p) => (p.$off ? "#c8c8c8" : "#707070")};
  background: linear-gradient(#f4f4f4, #d4d4d4);
  pointer-events: none;
  &::after {
    content: "";
    border: 4px solid transparent;
    border-top-color: ${(p) => (p.$off ? "#a8a8a8" : "#000")};
    border-bottom: 0;
  }
`;

const Adorn = styled.span`
  justify-self: start;
  align-self: center;
  display: flex;
  align-items: center;
  gap: 3px;
  padding-left: ${(p) => p.$pad}px;
  pointer-events: none;
`;

const Field = styled.input`
  flex: 1;
  min-width: 0;
  height: 20px;
  padding: 2px 3px 0;
  border: 1px solid #a8a8a8;
  border-radius: 0;
  background: ${(p) => (p.readOnly ? "#b1ceec" : "#fff")};
`;

const Ring = styled.span`
  width: 12px;
  height: 12px;
  border: 1px solid #222;
  border-radius: 50%;
`;

const Rule = styled.span`
  width: 32px;
  height: 1px;
  background: #000;
`;

const Combo = ({ label, value, width, indent = 1, pad = 4, off, children }) => (
  <ComboBox $width={width}>
    <Select aria-label={label} $indent={indent} disabled={off} defaultValue={value}>
      <option value={value}>{value}</option>
    </Select>
    {children && <Adorn $pad={pad}>{children}</Adorn>}
    <Arrow $off={off} />
  </ComboBox>
);

/* ---------- work area ---------- */

const Work = styled.div`
  flex: 1;
  display: grid;
  grid-template-columns: 31px minmax(0, 1fr) 31px;
`;

const Centre = styled.div`
  display: flex;
  flex-direction: column;
  min-width: 0;
`;

const Upper = styled.div`
  flex: 1;
  display: flex;
  min-height: 0;
`;

const Dock = styled.aside`
  display: flex;
  flex-direction: column;
  flex: none;
  width: 234px;
  padding-right: 3px;
`;

const DockTitle = styled.div`
  display: flex;
  align-items: center;
  gap: 5px;
  height: ${(p) => p.$h}px;
  padding: 1px 3px 0 2px;
  border: 1px solid #a0a0a0;
  > h2 { flex: 1; margin: 0; font: inherit; }
`;

const MiniButton = styled.button`
  display: grid;
  place-items: center;
  width: 10px;
  height: 12px;
  padding: 0;
  border: 0;
  background: none;
`;

const Selection = styled.div`
  display: flex;
  gap: 8px;
  padding: 14px 12px 7px 11px;
`;

const SelButton = styled.button`
  display: grid;
  place-items: center;
  width: 21px;
  height: 20px;
  padding: 0;
  border: 1px solid #8a8a8a;
  border-radius: 2px;
  background: linear-gradient(#f6f6f6, #dcdcdc);
`;

const PropertySheet = styled.div`
  flex: 1;
  display: flex;
  flex-direction: column;
  gap: 7px;
  margin: 0 11px 12px 11px;
  padding: 9px 10px 9px 9px;
  border: 1px solid #82878f;
`;

const Group = styled.fieldset`
  display: flex;
  flex-direction: column;
  min-width: 0;
  margin: 0;
  padding: 9px 8px 8px 9px;
  border: 1px solid #d3dde4;
  border-radius: 4px;
  box-shadow: 0 1px #fff;
  > legend { margin-left: -4px; padding: 1px 3px 0; line-height: 13px; }
`;

const PropRow = styled.div`
  display: flex;
  align-items: center;
  gap: 11px;
  height: 20px;
  padding-left: 1px;
`;

const View = styled.main`
  flex: 1;
  display: flex;
  flex-direction: column;
  min-width: 0;
  border-left: 1px solid #777;
  box-shadow: -1px 0 #fff;
`;

const Canvas = styled.div`
  position: relative;
  flex: 1;
  background: #dcdcdc;
`;

const Drawing = styled.svg`
  position: absolute;
  left: 89px;
  top: 239px;
`;

const Pointer = styled.svg`
  position: absolute;
  left: 464px;
  top: 605px;
`;

const Tabs = styled.div`
  display: flex;
  height: 16px;
  padding-left: 1px;
`;

const Tab = styled.button`
  position: relative;
  z-index: ${(p) => (p.$on ? 1 : 0)};
  width: ${(p) => p.$w}px;
  height: ${(p) => (p.$on ? 15 : 14)}px;
  margin-right: 1px;
  padding: 0;
  border: 0;
  background: none;
  line-height: ${(p) => (p.$on ? 15 : 13)}px;
  > span { position: relative; z-index: 1; }
  &::before, &::after {
    content: "";
    position: absolute;
    top: 0;
    bottom: 0;
    width: 50%;
    border: 0 solid #111;
    border-bottom-width: 1px;
    background: ${(p) => (p.$on ? "#fff" : "#f0f0f0")};
  }
  &::before { left: 3px; border-left-width: 1px; border-bottom-left-radius: 4px; transform: skewX(24deg); }
  &::after { right: 3px; border-right-width: 1px; border-bottom-right-radius: 4px; transform: skewX(-24deg); }
`;

const Splitter = styled.div`
  height: 5px;
  border-top: 1px solid #fff;
  box-shadow: inset 0 1px #a8a8a8, inset 0 2px #6f6f6f;
`;

const Output = styled.div`
  display: flex;
  height: 36px;
  margin-top: 2px;
  border: 1px solid #82878f;
  background: #fff;
  font: 13px/16px "Liberation Sans", Arial, sans-serif;
`;

const Log = styled.pre`
  flex: 1;
  margin: -1px 0 0;
  padding-left: 4px;
  font: inherit;
`;

const ScrollBar = styled.div`
  display: flex;
  flex-direction: column;
  justify-content: space-around;
  align-items: center;
  width: 16px;
  background: #f0f0f0;
`;

const CommandInput = styled.input`
  display: block;
  width: 100%;
  height: 16px;
  padding: 0 4px;
  border: 0;
  background: #fff;
  font: 13px/16px "Liberation Sans", Arial, sans-serif;
`;

/* ---------- status bar ---------- */

const Status = styled.footer`
  display: flex;
  align-items: center;
  height: 28px;
  padding: 1px 0 0 345px;
  font: 12px/16px ${ui};
`;

const StatusSep = styled.span`
  width: 1px;
  height: 24px;
  margin: ${(p) => (p.$end ? "0 0 0 auto" : "0")};
  background: #d0d0d0;
`;

const StatusGroup = styled.div`
  display: flex;
  gap: 8px;
  margin: 0 1px 0 4px;
  padding: 1px;
  border: 1px solid #dde5ea;
  border-radius: 3px;
`;

const Toggle = styled.button`
  width: ${(p) => p.$w}px;
  height: 20px;
  padding: 0;
  border: 1px solid ${(p) => (p.$on ? "#1f5a80" : "#737373")};
  border-radius: 3px;
  box-shadow: inset 0 0 0 1px ${(p) => (p.$on ? "#7fb6d8" : "#fafafa")};
  background: ${(p) => (p.$on ? "linear-gradient(#cfe9f8 45%, #84bfe2 50%, #6aaedb)" : "linear-gradient(#f3f3f3 45%, #dedede 50%, #d0d0d0)")};
`;

const Coordinates = styled.output`
  padding: 1px 0 0 4px;
  font: 11px/14px ${ui};
`;

const SizeGrip = styled.svg`
  align-self: flex-end;
  margin: 0 2px 1px 8px;
`;

/* ---------- data ---------- */

const standard = [
  ["neu", "Nouveau"], ["open", "Ouvrir"], ["save", "Enregistrer"], "|",
  ["print", "Imprimer"], ["preview", "Aperçu"], "|",
  ["cut", "Couper"], ["copy", "Copier"], ["paste", "Coller"], ["brush", "Copier les propriétés"], "|",
  ["undo", "Annuler"], ["redo", "Rétablir"], "|",
  ["pan", "Panoramique"], ["zoomdyn", "Zoom dynamique"], ["zoomprev", "Zoom précédent"], "|",
  ["entity", "Propriétés"],
];
const dims = [
  ["dimSmart", "Cote intelligente"], ["dimAligned", "Alignée"], ["dimLinear", "Linéaire"], ["dimBase", "Ligne de base"], ["dimCont", "Continue"], ["dimObl", "Oblique"], "|",
  ["centre", "Centre"], ["diam", "Diamètre"], ["radius", "Rayon"], "|",
  ["angle", "Angulaire"], ["arc", "Longueur d'arc"], ["jog", "Ordonnée"], "|",
  ["note", "Ligne de repère"], ["tol", "Tolérance"], "|",
  ["editDim", "Editer la cote"], ["editDimText", "Editer le texte"], ["dimShift", "Déplacer la cote"], "|",
  ["dimPaint", "Style de cote"],
];
const layerTools = [
  ["layOff", "Masquer"], ["layOn", "Afficher"], "|", ["layFreeze", "Geler"], ["layThaw", "Dégeler"], "|",
  ["layLock", "Verrouiller"], ["layUnlock", "Déverrouiller"], "|", ["layIso", "Isoler"], ["layUniso", "Désisoler"], "|",
  ["check", "Activer le calque"],
];
const draw = [
  ["line", "Ligne"], ["xline", "Ligne infinie"], ["poly", "Polygone"], ["rect", "Rectangle"], ["arc3", "Polyligne"], ["arcS", "Arc"],
  ["circle", "Cercle"], ["ellipse", "Ellipse"], ["ellArc", "Arc elliptique"], ["points", "Point"], ["spline", "Spline"], ["hatch", "Hachures"],
  ["annot", "Créer un bloc"], ["region", "Région"], ["mtext", "Note"], ["stext", "Note simple"], ["cloudEdit", "Nuage à main levée"],
  ["cloudRect", "Nuage rectangulaire"], ["cloudEll", "Nuage elliptique"], ["cloudFree", "Nuage"],
];
const modify = [
  ["erase", "Supprimer"], ["move", "Déplacer"], ["mirror", "Miroir"], ["copyE", "Copier"], ["offset", "Décalage"], ["pattern", "Motif"],
  ["rotate", "Rotation"], ["scale", "Echelle"], ["stretch", "Etirer"], ["chamfer", "Chanfrein"], ["fillet", "Congé"], ["splitPt", "Diviser au point"],
  ["split", "Diviser"], ["weld", "Souder"], ["extend", "Prolonger"], ["trim", "Ajuster"], ["hatchEdit", "Editer les hachures"],
  ["order", "Ordre"], ["polyEdit", "Editer la polyligne"], ["bomb", "Décomposer"],
];
const menus = ["Fichier", "Editer", "Affichage", "Insertion", "Format", "Cote", "Dessin", "Modifier", "Outils", "Souris 3D", "Fenêtre", "Aide"];

const solidLine = "ByLayer\u00a0\u00a0\u00a0 Solid line";

const groups = [
  ["Général", [
    ["pLayer", "Calque", "combo", "0"],
    ["pColor", "Couleur", "ring", "ByLayer"],
    ["pScale", "Echelle du style de ligne", "text", "1"],
    ["pWeight", "Epaisseur de ligne", "rule", "ByLayer"],
    ["pLink", "Hyperlien", "text", ""],
    ["pStyle", "Style de ligne", "combo", solidLine],
    ["pTransp", "Transparence", "text", "ByLayer"],
    ["pPrint", "Style d'impression", "off", ""],
  ]],
  ["Vue", [
    ["vx", "Centre X", "fixed", "279.1334"],
    ["vy", "Centre Y", "fixed", "204.7276"],
    ["vz", "Centre Z", "fixed", "0"],
    ["vh", "Hauteur", "fixed", "641.9887"],
    ["vw", "Largeur", "fixed", "759.375"],
  ]],
  ["Divers", [
    ["dOn", "Activé", "combo", "Oui"],
    ["dLock", "Verrouillé", "combo", "Non"],
    ["dScale", "Echelle personnalisée", "text", "1"],
    ["dStd", "Echelle standard", "combo", "1:1"],
    ["dShade", "Impression ombrée", "combo", "Comme affiché"],
    ["dUcs", "SCU par fenêtre", "combo", "Oui"],
    ["dAnn", "Echelle d'annotation", "off", "Non"],
    ["dLink", "Lien", "fixed", ""],
  ]],
];

const Property = ({ row: [icon, label, kind, value] }) => (
  <PropRow>
    <Icon name={icon} />
    {kind === "combo" && <Combo label={label} value={value} />}
    {kind === "off" && <Combo label={label} value={value} off />}
    {kind === "ring" && <Combo label={label} value={value} indent={21} pad={6}><Ring /></Combo>}
    {kind === "rule" && <Combo label={label} value={value} indent={37}><Rule /></Combo>}
    {kind === "text" && <Field aria-label={label} defaultValue={value} />}
    {kind === "fixed" && <Field aria-label={label} value={value} readOnly />}
  </PropRow>
);

const Float = () => (
  <Svg width="10" height="10" viewBox="0 0 10 10"><path d="M3.500 3.500 V1 H9 V6.500 H6.500 M3 1.500 H9 M1 4.500 H6.500 V9.500 H1Z M1 5 H7" fill="none" stroke="#000" strokeWidth="1.200" /></Svg>
);
const Cross = () => (
  <Svg width="9" height="9" viewBox="0 0 9 9"><path d="M1 1 L8 8 M8 1 L1 8" stroke="#000" strokeWidth="1.600" /></Svg>
);

export default function App() {
  return (
    <Frame>
      <Global />
      <TitleBar>
        <AppTitle><Icon name="logo" size={16} />DraftSight - [NONAME_0.dwg*]</AppTitle>
        <GlassText aria-hidden="true">Poser une question</GlassText>
        <WindowButtons>
          <WindowButton type="button" aria-label="Réduire" $first>
            <Svg width="13" height="13" viewBox="0 0 13 13"><rect x="0.500" y="6.500" width="12" height="4" rx="1" fill="#fff" stroke="#4d555c" /></Svg>
          </WindowButton>
          <WindowButton type="button" aria-label="Agrandir">
            <Svg width="12" height="11" viewBox="0 0 12 11"><rect x="1.500" y="1.500" width="9" height="7" fill="none" stroke="#fff" strokeWidth="3" /><rect x="0.500" y="0.500" width="11" height="9" fill="none" stroke="#4d555c" /><rect x="3.500" y="3.500" width="5" height="3" fill="none" stroke="#4d555c" /></Svg>
          </WindowButton>
          <WindowButton type="button" aria-label="Fermer" $wide>
            <Svg width="13" height="11" viewBox="0 0 13 11"><path d="M1 0.500 H4.500 L6.500 3 L8.500 0.500 H12 L8.500 5 L12 9.500 H8.500 L6.500 7 L4.500 9.500 H1 L4.500 5Z" fill="#fff" stroke="#4d555c" /></Svg>
          </WindowButton>
        </WindowButtons>
      </TitleBar>

      <Client>
        <MenuBar>
          <Icon name="logo" size={16} />
          <MenuList>{menus.map((m) => <MenuItem key={m} type="button">{m}</MenuItem>)}</MenuList>
          <MdiButtons>
            <MdiButton type="button" aria-label="Réduire le document"><Svg width="9" height="9" viewBox="0 0 9 9"><path d="M1 7 H7" stroke="#5a7288" strokeWidth="2" /></Svg></MdiButton>
            <MdiButton type="button" aria-label="Restaurer le document"><Svg width="9" height="9" viewBox="0 0 9 9"><path d="M3 3 V1 H8 V5 H6 M1 4 H6 V8 H1Z" fill="none" stroke="#5a7288" strokeWidth="1.200" /></Svg></MdiButton>
            <MdiButton type="button" aria-label="Fermer le document"><Svg width="9" height="9" viewBox="0 0 9 9"><path d="M1.500 1.500 L7.500 7.500 M7.500 1.500 L1.500 7.500" stroke="#5a7288" strokeWidth="2" /></Svg></MdiButton>
          </MdiButtons>
        </MenuBar>

        <Toolbar><Grip /><Tools items={standard} /></Toolbar>
        <Toolbar><Grip /><Tools items={dims} /></Toolbar>
        <Toolbar>
          <Grip />
          <Tools items={[["layerMgr", "Gestionnaire de calques"]]} />
          <Combo label="Calque actif" value="0" width={300} indent={85} pad={3}>
            <Icon name="green" /><Icon name="puddle" /><Icon name="unlock" /><Ring />
          </Combo>
          <SectionEnd $gap={7} />
          <Grip />
          <Combo label="Couleur de ligne" value="ByLayer" width={117} indent={21} pad={6}><Ring /></Combo>
          <Separator />
          <Combo label="Style de ligne" value={solidLine} width={117} />
          <Separator />
          <Combo label="Epaisseur de ligne" value="ByLayer" width={118} indent={37}><Rule /></Combo>
          <SectionEnd $gap={0} />
          <Grip />
          <Tools items={layerTools} />
          <Overflow type="button" aria-label="Plus d'outils">»</Overflow>
        </Toolbar>

        <Work>
          <SideBar $left><Grip $flat /><Tools items={draw} /></SideBar>

          <Centre>
            <Upper>
              <Dock>
                <DockTitle $h={19}>
                  <h2>Propriétés</h2>
                  <MiniButton type="button" aria-label="Détacher"><Float /></MiniButton>
                  <MiniButton type="button" aria-label="Fermer le panneau"><Cross /></MiniButton>
                </DockTitle>
                <Selection>
                  <Combo label="Sélection" value="Pas de sélection" />
                  <SelButton type="button" aria-label="Sélectionner une zone"><Icon name="selArea" size={16} /></SelButton>
                  <SelButton type="button" aria-label="Sélectionner"><Icon name="selPick" size={16} /></SelButton>
                  <SelButton type="button" aria-label="Sélectionner à l'écran"><Icon name="selScreen" size={16} /></SelButton>
                  <SelButton type="button" aria-label="Sélection rapide"><Icon name="selFilter" size={16} /></SelButton>
                </Selection>
                <PropertySheet>
                  {groups.map(([name, rows]) => (
                    <Group key={name}>
                      <legend>{name}</legend>
                      {rows.map((r) => <Property key={r[0]} row={r} />)}
                    </Group>
                  ))}
                </PropertySheet>
              </Dock>

              <View>
                <Canvas>
                  <Drawing width="405" height="287" viewBox="0 0 405 287" shapeRendering="crispEdges" role="img" aria-label="Présentation1">
                    <rect x="0.500" y="0.500" width="404" height="286" fill="#000" stroke="#fff" />
                    <path d="M7.500 19.500 H397.500 M7.500 267.500 H397.500" stroke="#fff" strokeDasharray="9 7.600" />
                    <path d="M7.500 19.500 V267.500 M397.500 19.500 V267.500" stroke="#fff" strokeDasharray="8 8" />
                    <rect x="47.500" y="44.500" width="312" height="198" fill="none" stroke="#fff" />
                    <g fill="none" stroke="#00f">
                      <path d="M8.500 193 V268" />
                      <path d="M8 267.500 H46" />
                      <path d="M8.500 193 L45.500 267" />
                      <path d="M8 256.500 H19.500 V267" />
                      <path d="M7 227 L13.500 234 V242 M13.500 234 L20 227 M24 255 L37 270 M37 255 L24 270" />
                    </g>
                  </Drawing>
                  <Pointer width="13" height="13" viewBox="0 0 13 13" aria-hidden="true">
                    <path d="M4 4 V13 L7 9 L12 12Z" fill="#fff" />
                    <path d="M1.500 1.500 H6.500 V6.500 H1.500Z M4.500 4 V12.500 M4 4 L12 12" fill="none" stroke="#000" />
                  </Pointer>
                </Canvas>
                <Tabs>
                  <Tab type="button" $w={56}><span>Modèle</span></Tab>
                  <Tab type="button" $w={91} $on><span>Présentation1</span></Tab>
                  <Tab type="button" $w={90}><span>Présentation2</span></Tab>
                </Tabs>
              </View>
            </Upper>

            <Splitter />
            <DockTitle $h={17}>
              <h2>Fenêtre de commande</h2>
              <MiniButton type="button" aria-label="Détacher la fenêtre de commande"><Float /></MiniButton>
              <MiniButton type="button" aria-label="Fermer la fenêtre de commande"><Cross /></MiniButton>
            </DockTitle>
            <Output>
              <Log>{": ._MAINSELECT\nSpécifiez le coin opposé:"}</Log>
              <ScrollBar aria-hidden="true">
                <Svg width="7" height="4" viewBox="0 0 7 4"><path d="M0 4 L3.500 0 L7 4Z" fill="#444" /></Svg>
                <Svg width="7" height="4" viewBox="0 0 7 4"><path d="M0 0 L3.500 4 L7 0Z" fill="#444" /></Svg>
              </ScrollBar>
            </Output>
            <CommandInput aria-label="Commande" defaultValue=":" />
          </Centre>

          <SideBar><Grip $flat /><Tools items={modify} /></SideBar>
        </Work>

        <Status>
          <StatusSep />
          <StatusGroup>
            <Toggle type="button" $w={50}>Aimant</Toggle>
            <Toggle type="button" $w={38}>Grille</Toggle>
            <Toggle type="button" $w={42}>Ortho</Toggle>
          </StatusGroup>
          <StatusSep />
          <StatusGroup>
            <Toggle type="button" $w={46}>Polaire</Toggle>
            <Toggle type="button" $w={43} $on aria-pressed="true">ESnap</Toggle>
            <Toggle type="button" $w={45}>ETrack</Toggle>
          </StatusGroup>
          <StatusSep />
          <Coordinates>(385.6121,-106.9174,0)</Coordinates>
          <StatusSep $end />
          <SizeGrip width="11" height="11" viewBox="0 0 11 11" aria-hidden="true">
            <path d="M8 1 h2 v2 h-2Z M8 5 h2 v2 h-2Z M4 5 h2 v2 h-2Z M8 9 h2 v2 h-2Z M4 9 h2 v2 h-2Z M0 9 h2 v2 h-2Z" fill="#bdbdbd" />
          </SizeGrip>
        </Status>
      </Client>
    </Frame>
  );
}
